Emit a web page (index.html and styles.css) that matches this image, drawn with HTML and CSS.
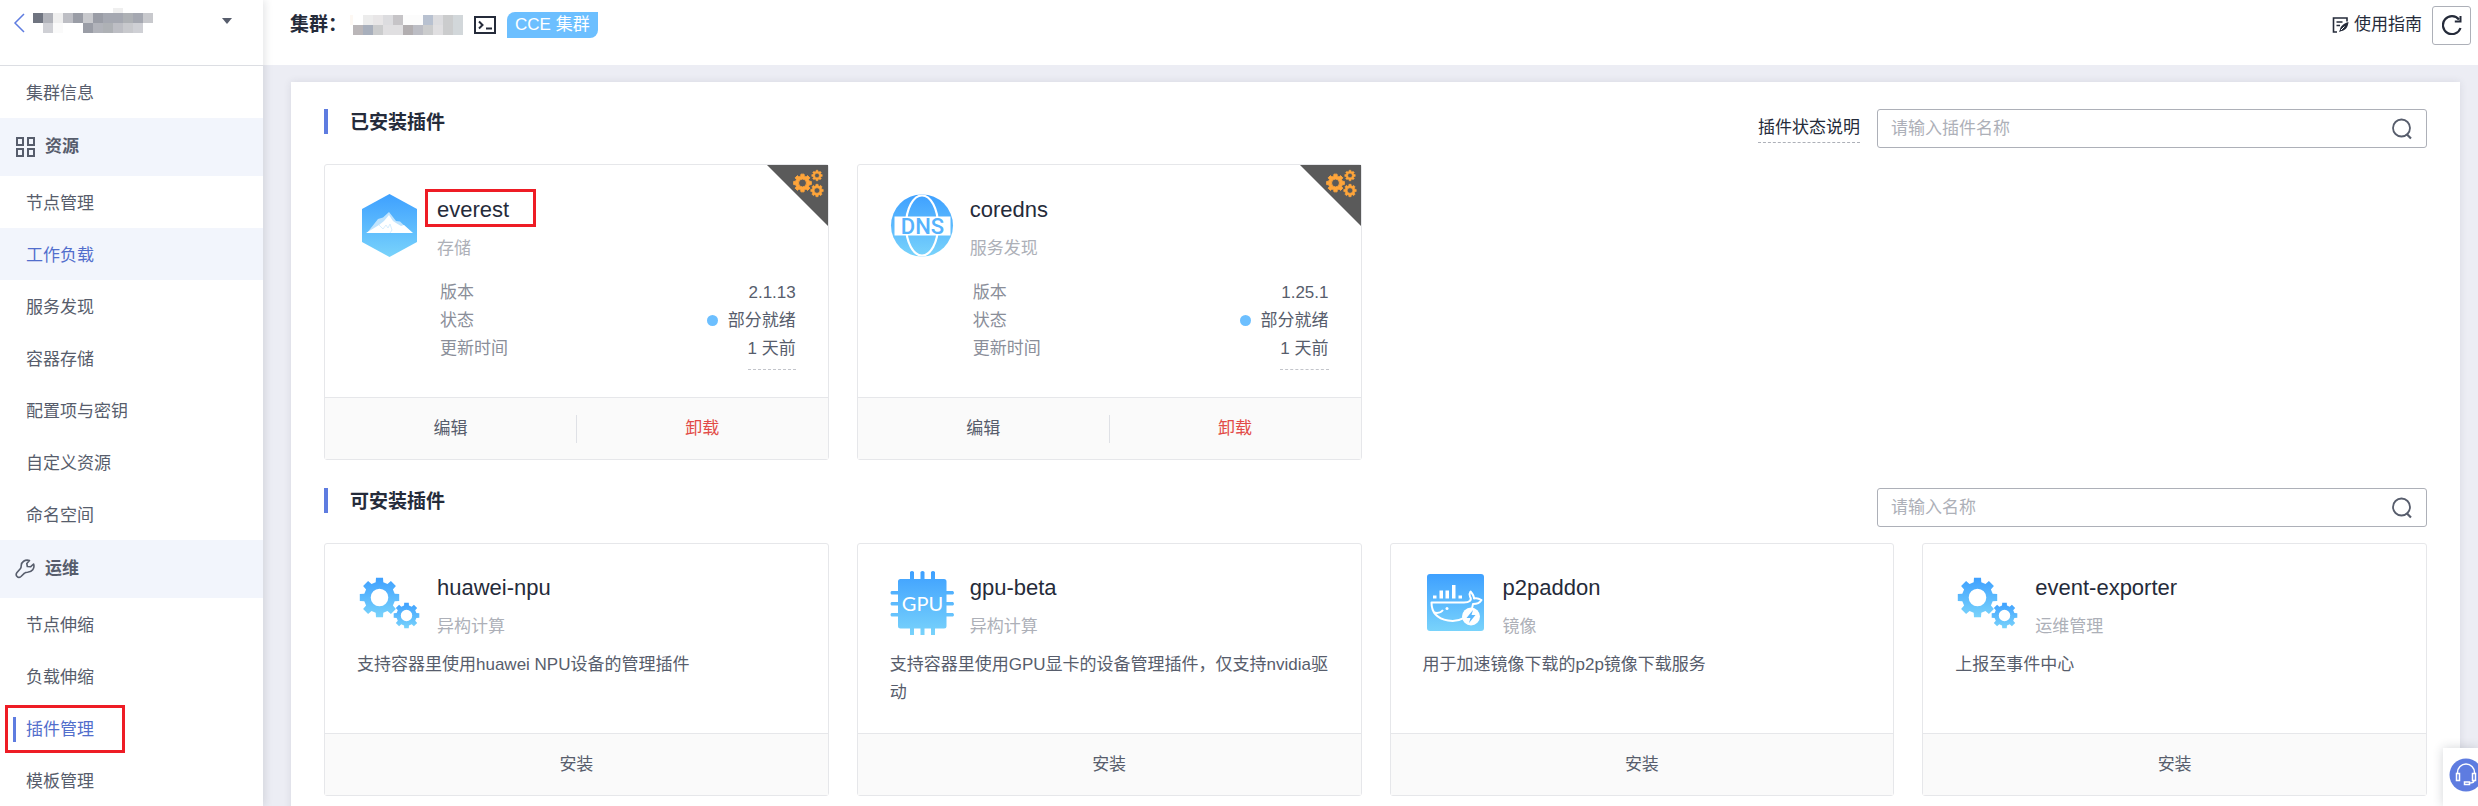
FILE: index.html
```html
<!DOCTYPE html>
<html lang="zh-CN">
<head>
    <meta charset="UTF-8">
    <meta name="viewport" content="width=device-width, initial-scale=1.0">
    <title>插件管理</title>
    <link rel="stylesheet" href="styles.css">
</head>
<body>
    <!-- Shared shapes and gradients -->
    <svg class="defs" aria-hidden="true">
        <defs>
            <linearGradient id="blue" x1="0" y1="0" x2="0" y2="1">
                <stop offset="0" stop-color="#3ea0ff"/>
                <stop offset="1" stop-color="#79d3fb"/>
            </linearGradient>
            <path id="gear" fill-rule="evenodd" d="M7.6-1.9L9.85-1.75V1.75L7.6 1.9L6.7 4L8.2 5.7L5.7 8.2L4 6.7L1.9 7.6L1.75 9.85H-1.75L-1.9 7.6L-4 6.7L-5.7 8.2L-8.2 5.7L-6.7 4L-7.6 1.9L-9.85 1.75V-1.75L-7.6-1.9L-6.7-4L-8.2-5.7L-5.7-8.2L-4-6.7L-1.9-7.6L-1.75-9.85H1.75L1.9-7.6L4-6.7L5.7-8.2L8.2-5.7L6.7-4ZM4.4 0A4.4 4.4 0 1 0-4.4 0A4.4 4.4 0 1 0 4.4 0Z"/>
            <symbol id="gears" viewBox="0 0 64 64">
                <use href="#gear" fill="url(#blue)" transform="translate(22.5 26.5) scale(2)"/>
                <use href="#gear" fill="url(#blue)" transform="translate(49.5 44.5) scale(1.3)"/>
            </symbol>
            <symbol id="corner" viewBox="0 0 61 61">
                <path d="M0 0H61V61Z" fill="#5a5a5a"/>
                <g fill="#ffa53a" stroke="#ffa53a">
                    <use href="#gear" transform="translate(35.5 18) scale(.9)"/>
                    <use href="#gear" transform="translate(50 10.5) scale(.53)"/>
                    <use href="#gear" transform="translate(50 25.5) scale(.63)"/>
                </g>
            </symbol>
            <symbol id="search" viewBox="0 0 22 22">
                <circle cx="10.5" cy="10" r="8.5" fill="none" stroke="#575d6c" stroke-width="1.8"/>
                <path d="M15.5 16L20 20.5" stroke="#575d6c" stroke-width="2.2"/>
            </symbol>
        </defs>
    </svg>

    <div class="app">
        <aside class="sidebar">
            <div class="switcher">
                <a class="back" href="#" aria-label="返回">
                    <svg width="12" height="20" viewBox="0 0 12 20"><path d="M11 1L2 10L11 19" fill="none" stroke="#5e7ce0" stroke-width="1.5"/></svg>
                </a>
                <svg class="masked" width="120" height="25" viewBox="0 0 120 25" shape-rendering="crispEdges">
                    <path fill="#6f7480" d="M0 5h10v10H0z"/>
                    <path fill="#b1b3ba" d="M10 5h10v10H10zM60 15h10v10H60z"/>
                    <path fill="#efefef" d="M20 5h10v10H20zM80 0h10v5H80z"/>
                    <path fill="#bdbec4" d="M30 5h10v10H30zM80 15h10v10H80z"/>
                    <path fill="#9a9da6" d="M40 5h10v10H40zM60 5h10v10H60zM50 15h10v10H50z"/>
                    <path fill="#c8c9cd" d="M50 5h10v10H50zM110 5h10v10h-10zM90 15h10v10H90z"/>
                    <path fill="#a5a8b1" d="M70 5h20v10H70zM100 5h10v10h-10z"/>
                    <path fill="#aeb1b5" d="M90 5h10v10H90zM70 15h10v10H70z"/>
                    <path fill="#cfd0d5" d="M10 15h10v10H10zM100 15h10v10h-10z"/>
                    <path fill="#fafafa" d="M20 15h10v10H20z"/>
                </svg>
                <button class="caret" type="button" aria-label="切换集群">
                    <svg width="10" height="6" viewBox="0 0 10 6"><path d="M0 0H10L5 6Z" fill="#575d6c"/></svg>
                </button>
            </div>
            <nav class="menu">
                <a href="#">集群信息</a>
                <h2>
                    <svg width="20" height="20" viewBox="0 0 20 20" fill="none" stroke="#575d6c" stroke-width="2"><path d="M2 1h6v7H2zM13 1h6v7h-6zM2 12h6v7H2zM13 12h6v7h-6z"/></svg>
                    资源
                </h2>
                <a href="#">节点管理</a>
                <a class="hovered" href="#">工作负载</a>
                <a href="#">服务发现</a>
                <a href="#">容器存储</a>
                <a href="#">配置项与密钥</a>
                <a href="#">自定义资源</a>
                <a href="#">命名空间</a>
                <h2>
                    <svg width="20" height="20" viewBox="0 0 20 20" fill="none" stroke="#575d6c" stroke-width="1.6" stroke-linejoin="round"><path d="M14.5 1.5C10 .2 6 3 6.200 7C6.200 8.500 6 9 5.300 9.700L2 13.500C-.2 16.500 3 20 6 17.500L9.500 14.200C10.200 13.500 11 13.300 12.500 13.300C17 13.200 20 9.500 18.600 5L15.500 7.800L12.300 7.500L11.800 4.500Z"/></svg>
                    运维
                </h2>
                <a href="#">节点伸缩</a>
                <a href="#">负载伸缩</a>
                <a class="current" href="#" aria-current="page">插件管理</a>
                <a href="#">模板管理</a>
            </nav>
        </aside>

        <div class="main">
            <header class="topbar">
                <h1>集群：</h1>
                <svg class="masked" width="113" height="20" viewBox="0 0 113 20" shape-rendering="crispEdges">
                    <path fill="#fdf8f3" d="M0 0h3v10H0z"/>
                    <path fill="#ececec" d="M13 0h10v10H13z"/>
                    <path fill="#e8e6e7" d="M23 0h10v10H23z"/>
                    <path fill="#dcdcdf" d="M33 0h10v10H33zM83 0h10v10H83z"/>
                    <path fill="#c6c4c7" d="M43 0h10v10H43z"/>
                    <path fill="#fcfcfc" d="M53 0h20v10H53z"/>
                    <path fill="#b8c1d0" d="M73 0h10v10H73z"/>
                    <path fill="#cbcccd" d="M93 0h10v10H93zM23 10h10v10H23zM73 10h10v10H73zM93 10h10v10H93z"/>
                    <path fill="#d2d7da" d="M103 0h10v10h-10zM103 10h10v10h-10z"/>
                    <path fill="#bab6b8" d="M3 10h10v10H3z"/>
                    <path fill="#a8afbc" d="M13 10h10v10H13z"/>
                    <path fill="#e0dfe1" d="M33 10h20v10H33zM83 10h10v10H83z"/>
                    <path fill="#b2aeb0" d="M53 10h10v10H53z"/>
                    <path fill="#bcbdc4" d="M63 10h10v10H63z"/>
                </svg>
                <button class="icon-btn" type="button" aria-label="命令行">
                    <svg width="22" height="18" viewBox="0 0 22 18" fill="none" stroke="#252b3a" stroke-width="2"><path d="M1 1h20v16H1zM5 5.5l3.5 3.5L5 12.5M12 12.5h6"/></svg>
                </button>
                <span class="tag">CCE 集群</span>
                <a class="guide" href="#">
                    <svg width="18" height="16" viewBox="0 0 18 16" fill="none" stroke="#252b3a" stroke-width="1.6"><path d="M15 4.5V1H1.5V15H5M4.5 5h6M4.5 8.5H8"/><path d="M16.5 5C12 6.5 8.5 9 8 12.5L7 15L9.5 14C13.5 13.5 16 10 16.5 5Z" fill="#252b3a" stroke="none"/><path d="M9 13L12.5 9.5" stroke="#fff" stroke-width="1"/></svg>
                    使用指南
                </a>
                <button class="refresh" type="button" aria-label="刷新">
                    <svg width="20" height="20" viewBox="0 0 20 20" fill="none" stroke="#252b3a" stroke-width="2.2"><path d="M18.5 13A9 9 0 1 1 17 4.5"/><path d="M18.5 1V6.500H12.8" stroke-width="2"/></svg>
                </button>
            </header>

            <main class="panel">
                <section>
                    <div class="section-head">
                        <h2>已安装插件</h2>
                        <a class="status-help" href="#">插件状态说明</a>
                        <label class="search">
                            <input type="text" placeholder="请输入插件名称" aria-label="请输入插件名称">
                            <svg width="22" height="22"><use href="#search"/></svg>
                        </label>
                    </div>
                    <div class="cards installed">
                        <article class="card">
                            <svg class="corner" width="61" height="61"><use href="#corner"/></svg>
                            <div class="card-body">
                                <div class="card-head">
                                    <svg class="logo" viewBox="0 0 64 64">
                                        <path d="M32.5 1L60 16V49L32.5 64L5 49V16Z" fill="url(#blue)"/>
                                        <path d="M10 40L21 26L26 24.5L32 19L39 28L43 28.5L55 40Z" fill="#bfe3fd"/>
                                        <path d="M9 40L22 32L27 28L32 22L36 28L39 30L44 33L47 32L56 40Z" fill="#fff"/>
                                        <path d="M22 32L26 36L29 32L31 35L33 31L35 37L33 40" fill="none" stroke="#d9eefd"/>
                                    </svg>
                                    <div>
                                        <h3><span class="marked">everest</span></h3>
                                        <p>存储</p>
                                    </div>
                                </div>
                                <dl>
                                    <div><dt>版本</dt><dd>2.1.13</dd></div>
                                    <div><dt>状态</dt><dd class="partial">部分就绪</dd></div>
                                    <div><dt>更新时间</dt><dd class="time">1 天前</dd></div>
                                </dl>
                            </div>
                            <div class="card-foot">
                                <button type="button">编辑</button>
                                <button class="danger" type="button">卸载</button>
                            </div>
                        </article>
                        <article class="card">
                            <svg class="corner" width="61" height="61"><use href="#corner"/></svg>
                            <div class="card-body">
                                <div class="card-head">
                                    <svg class="logo" viewBox="0 0 64 64">
                                        <circle cx="32" cy="32.5" r="31" fill="url(#blue)"/>
                                        <ellipse cx="32" cy="32.5" rx="16" ry="30" fill="none" stroke="#fff" stroke-width="2.2"/>
                                        <path d="M4.5 23.5h56v19h-56z" fill="#fff"/>
                                        <text class="logo-dns" x="32.5" y="40.5" text-anchor="middle">DNS</text>
                                    </svg>
                                    <div>
                                        <h3>coredns</h3>
                                        <p>服务发现</p>
                                    </div>
                                </div>
                                <dl>
                                    <div><dt>版本</dt><dd>1.25.1</dd></div>
                                    <div><dt>状态</dt><dd class="partial">部分就绪</dd></div>
                                    <div><dt>更新时间</dt><dd class="time">1 天前</dd></div>
                                </dl>
                            </div>
                            <div class="card-foot">
                                <button type="button">编辑</button>
                                <button class="danger" type="button">卸载</button>
                            </div>
                        </article>
                    </div>
                </section>

                <section>
                    <div class="section-head">
                        <h2>可安装插件</h2>
                        <label class="search">
                            <input type="text" placeholder="请输入名称" aria-label="请输入名称">
                            <svg width="22" height="22"><use href="#search"/></svg>
                        </label>
                    </div>
                    <div class="cards available">
                        <article class="card">
                            <div class="card-body">
                                <div class="card-head">
                                    <svg class="logo"><use href="#gears"/></svg>
                                    <div>
                                        <h3>huawei-npu</h3>
                                        <p>异构计算</p>
                                    </div>
                                </div>
                                <p class="desc">支持容器里使用huawei NPU设备的管理插件</p>
                            </div>
                            <div class="card-foot"><button type="button">安装</button></div>
                        </article>
                        <article class="card">
                            <div class="card-body">
                                <div class="card-head">
                                    <svg class="logo" viewBox="0 0 64 64">
                                        <path fill="url(#blue)" d="M20 1q2-2 4 0V8h6.500V1q2-2 4 0V8H41V1q2-2 4 0V8h9q2.500 0 2.500 2.500V20H63q2 2 0 3.500H56.500V31H63q2 2 0 3.500H56.500V42H63q2 2 0 3.500H56.500V55q0 2.500-2.500 2.500H45V64q-2 1-4 0V57.500H34.500V64q-2 1-4 0V57.500H24V64q-2 1-4 0V57.500H10.500Q8 57.500 8 55V45.500H1.500q-2-2 0-3.500H8V34.500H1.500q-2-2 0-3.500H8V23.500H1.500q-2-2 0-3.500H8V10.500Q8 8 10.500 8H20Z"/>
                                        <text class="logo-gpu" x="32.5" y="40" text-anchor="middle">GPU</text>
                                    </svg>
                                    <div>
                                        <h3>gpu-beta</h3>
                                        <p>异构计算</p>
                                    </div>
                                </div>
                                <p class="desc">支持容器里使用GPU显卡的设备管理插件，仅支持nvidia驱动</p>
                            </div>
                            <div class="card-foot"><button type="button">安装</button></div>
                        </article>
                        <article class="card">
                            <div class="card-body">
                                <div class="card-head">
                                    <svg class="logo" viewBox="0 0 64 64">
                                        <rect x="4" y="3" width="57" height="57" rx="3" fill="url(#blue)"/>
                                        <path d="M10 24.5h3.5v3H10zM16.5 19.5H20v8h-3.5zM22.5 19.5H26v8h-3.5zM29 14h3.5v13.5H29zM35.5 24.5H39v3h-3.5z" fill="#fff"/>
                                        <g fill="none" stroke="#fff" stroke-width="2" stroke-linejoin="round">
                                            <path d="M8.5 31.5H41C46 31.5 49.5 29.5 47 25.5C46 23.5 46.5 22 47.5 20.5C50.5 24 51 25.5 51 27.5C54 26.5 56 27.5 58.5 29C56.5 32.5 53.5 33 50 33C48.5 46 36 51.5 25 49.5C13.5 47.5 8.5 41 8.5 31.5Z"/>
                                            <path d="M11 41.5C15 42.5 18 41.5 20 39"/>
                                        </g>
                                        <circle cx="24" cy="37.5" r="1.5" fill="#fff"/>
                                        <circle cx="48" cy="45.5" r="9" fill="#fff"/>
                                        <path d="M50 39L43.5 47H47.5L46 52L52.5 44H48.5Z" fill="#5bb8fd"/>
                                    </svg>
                                    <div>
                                        <h3>p2paddon</h3>
                                        <p>镜像</p>
                                    </div>
                                </div>
                                <p class="desc">用于加速镜像下载的p2p镜像下载服务</p>
                            </div>
                            <div class="card-foot"><button type="button">安装</button></div>
                        </article>
                        <article class="card">
                            <div class="card-body">
                                <div class="card-head">
                                    <svg class="logo"><use href="#gears"/></svg>
                                    <div>
                                        <h3>event-exporter</h3>
                                        <p>运维管理</p>
                                    </div>
                                </div>
                                <p class="desc">上报至事件中心</p>
                            </div>
                            <div class="card-foot"><button type="button">安装</button></div>
                        </article>
                    </div>
                </section>
            </main>
        </div>
    </div>

    <button class="support" type="button" aria-label="在线客服">
        <svg width="34" height="34" viewBox="0 0 34 34" fill="none" stroke="#fff" stroke-width="1.5">
            <circle cx="17" cy="17" r="16.5" fill="#5e7ce0" stroke="none"/>
            <path d="M8.5 16V14.5A8.5 8.5 0 0 1 25.5 14.5V16M7.5 15.5h3v7h-3zM23.5 15.5h3v7h-3zM25 22.5C25 24.5 23 25 20.5 25M15.5 24h5v2.5h-5z"/>
        </svg>
    </button>
</body>
</html>
```
FILE: styles.css
```css
*,
*::before,
*::after {
    box-sizing: border-box;
}

body {
    margin: 0;
    font-family: "Liberation Sans", "Noto Sans CJK SC", sans-serif;
    font-size: 17px;
    line-height: 28px;
    color: #575d6c;
    background: #ecedf4;
}

h1, h2, h3, p, dl, dd {
    margin: 0;
}

a {
    color: inherit;
    text-decoration: none;
}

button {
    padding: 0;
    border: none;
    background: none;
    font: inherit;
    color: inherit;
    cursor: pointer;
}

svg {
    display: block;
    flex: none;
}

.defs {
    position: absolute;
    width: 0;
    height: 0;
}

.app {
    display: flex;
    height: 100vh;
    overflow: hidden;
}

/* Sidebar */
.sidebar {
    flex: none;
    width: 263px;
    background: #fff;
    box-shadow: 2px 0 8px rgba(37, 43, 58, 0.12);
    z-index: 1;
}

.switcher {
    display: flex;
    align-items: flex-start;
    height: 66px;
    padding: 8px 31px 0 13px;
    border-bottom: 1px solid #dcdee3;
}

.back {
    margin: 5px 8px 0 0;
}

.caret {
    margin: 10px 0 0 auto;
}

.menu a,
.menu h2 {
    display: flex;
    align-items: center;
    height: 52px;
    padding: 3px 0 0 26px;
}

.menu h2 {
    gap: 10px;
    height: 58px;
    padding: 0 0 0 15px;
    font-size: 17px;
    background: #f2f5fc;
}

.menu .hovered {
    color: #526ecc;
    background: #f2f5fc;
}

.menu .current {
    position: relative;
    color: #526ecc;
}

.menu .current::before {
    content: "";
    position: absolute;
    left: 13px;
    top: 15px;
    width: 3px;
    height: 25px;
    background: #5e7ce0;
}

.menu .current::after {
    content: "";
    position: absolute;
    left: 5px;
    top: 3px;
    width: 120px;
    height: 48px;
    border: 3px solid #ee1c25;
}

/* Top bar */
.main {
    flex: 1;
    min-width: 0;
    overflow-y: auto;
    scrollbar-width: none;
}

.topbar {
    display: flex;
    align-items: center;
    height: 65px;
    padding: 0 7px 15px 27px;
    background: #fff;
    color: #252b3a;
}

.topbar h1 {
    font-size: 19px;
}

.topbar .masked {
    margin: 0 11px 0 3px;
}

.tag {
    margin-left: 11px;
    padding: 0 8px;
    line-height: 26px;
    border-radius: 8px 0 8px 0;
    background: #6cbfff;
    color: #fff;
}

.guide {
    display: flex;
    align-items: center;
    gap: 4px;
    margin-left: auto;
}

.refresh {
    display: flex;
    align-items: center;
    justify-content: center;
    width: 39px;
    height: 39px;
    margin-left: 10px;
    border: 1px solid #adb0b8;
    border-radius: 3px;
}

/* Content panel */
.panel {
    margin: 17px 18px 17px 28px;
    padding: 27px 33px 32px;
    background: #fff;
    box-shadow: 0 0 8px rgba(37, 43, 58, 0.1);
}

section + section {
    margin-top: 28px;
}

.section-head {
    display: flex;
    align-items: flex-start;
    height: 39px;
    margin-bottom: 16px;
}

.section-head h2 {
    margin-right: auto;
    padding: 2px 0 0 22px;
    border-left: 4px solid #5e7ce0;
    font-size: 19px;
    line-height: 23px;
    color: #252b3a;
}

.status-help {
    margin: 5px 17px 0 0;
    border-bottom: 1px dashed #adb0b8;
    color: #252b3a;
}

.search {
    display: flex;
    align-items: center;
    width: 550px;
    height: 39px;
    padding: 0 13px;
    border: 1px solid #adb0b8;
    border-radius: 3px;
}

.search input {
    flex: 1;
    min-width: 0;
    padding: 0;
    border: none;
    outline: none;
    font: inherit;
    color: #252b3a;
}

.search input::placeholder {
    color: #adb0b8;
}

.cards {
    display: grid;
    grid-template-columns: repeat(4, 1fr);
    gap: 28px;
}

.card {
    position: relative;
    border: 1px solid #e6e7ea;
    border-radius: 3px;
}

.corner {
    position: absolute;
    top: 0;
    right: 0;
}

.card-body {
    min-height: 189px;
    padding: 27px 32px 0;
}

.installed .card-body {
    min-height: 232px;
    padding-top: 28px;
}

.card-head {
    display: flex;
    gap: 16px;
}

.logo {
    width: 64px;
    height: 64px;
}

.logo-dns {
    font: 500 22px Roboto, sans-serif;
    fill: #55b2fd;
}

.logo-gpu {
    font: 20px Lato, sans-serif;
    fill: #fff;
}

.card-head h3 {
    margin-bottom: 8px;
    font-size: 22px;
    font-weight: 400;
    line-height: 34px;
    color: #252b3a;
}

.card-head p {
    color: #adb0b8;
}

/* Highlight frame round a plugin name */
.marked {
    position: relative;
}

.marked::after {
    content: "";
    position: absolute;
    left: -12px;
    top: -8px;
    width: 111px;
    height: 38px;
    border: 3px solid #ee1c25;
}

.card dl {
    margin: 16px 0 0 83px;
}

.card dl div {
    display: flex;
    justify-content: space-between;
}

.card dt {
    color: #8a8e99;
}

.partial::before {
    content: "";
    display: inline-block;
    width: 11px;
    height: 11px;
    margin-right: 10px;
    border-radius: 50%;
    background: #6cbfff;
}

.time {
    padding-bottom: 6px;
    border-bottom: 1px dashed #c3c5cb;
}

.desc {
    margin-top: 10px;
}

.card-foot {
    display: flex;
    align-items: center;
    height: 62px;
    border-top: 1px solid #e6e7ea;
    background: #fafafa;
}

.card-foot button {
    flex: 1;
}

.card-foot button + button {
    border-left: 1px solid #dfe1e6;
}

.card-foot .danger {
    color: #e24b47;
}

/* Support entry at the window edge */
.support {
    position: fixed;
    right: 0;
    bottom: 0;
    width: 35px;
    height: 58px;
    padding: 10px 0 0 6px;
    overflow: hidden;
    background: #fff;
    box-shadow: 0 0 10px rgba(37, 43, 58, 0.2);
    z-index: 2;
}

.support svg {
    margin-bottom: 14px;
}
```
